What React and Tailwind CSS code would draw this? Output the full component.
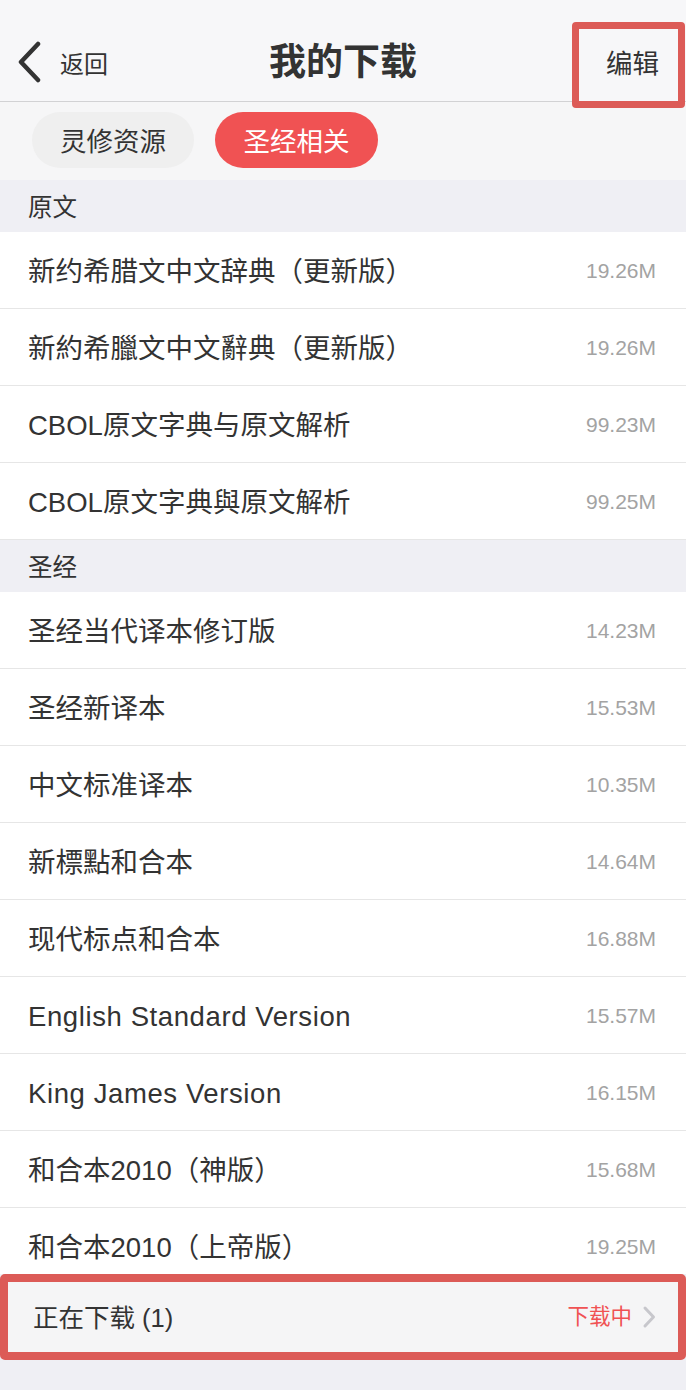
import React from 'react';

const FONT = { fontFamily: '"Liberation Sans", "Noto Sans CJK SC", sans-serif' };

const sections = [
  {
    title: '原文',
    items: [
      ['新约希腊文中文辞典（更新版）', '19.26M'],
      ['新約希臘文中文辭典（更新版）', '19.26M'],
      ['CBOL原文字典与原文解析', '99.23M'],
      ['CBOL原文字典與原文解析', '99.25M'],
    ],
  },
  {
    title: '圣经',
    items: [
      ['圣经当代译本修订版', '14.23M'],
      ['圣经新译本', '15.53M'],
      ['中文标准译本', '10.35M'],
      ['新標點和合本', '14.64M'],
      ['现代标点和合本', '16.88M'],
      ['English Standard Version', '15.57M', true],
      ['King James Version', '16.15M', true],
      ['和合本2010（神版）', '15.68M'],
      ['和合本2010（上帝版）', '19.25M'],
    ],
  },
];

function Row({ name, size, latin }) {
  return (
    <div className="flex items-center justify-between h-[77px] border-b border-[#e6e6e6] bg-white pl-[28px] pr-[30px]">
      <span className={`mt-[4px] text-[27.5px] text-[#333333] leading-none ${latin ? 'tracking-[0.6px]' : ''}`}>{name}</span>
      <span className="text-[21px] text-[#a3a3a3] leading-none">{size}</span>
    </div>
  );
}

export default function App() {
  return (
    <div className="w-[686px] h-[1390px] flex flex-col bg-[#efeff4] overflow-hidden" style={FONT}>
      {/* nav bar */}
      <div className="relative h-[102px] shrink-0 bg-[#f7f7f9] border-b border-[#d2d2d4] pt-[22px]">
        <div className="relative flex items-center h-[79px]">
          <div className="flex items-center pl-[16px] gap-[18px]">
            <svg width="26" height="42" viewBox="0 0 26 42" fill="none">
              <path d="M22 3 L5 21 L22 39" stroke="#333" strokeWidth="4.5" strokeLinecap="round" strokeLinejoin="round" />
            </svg>
            <span className="text-[24px] text-[#333] leading-none mt-[6px]">返回</span>
          </div>
          <div className="absolute inset-x-0 flex justify-center pointer-events-none">
            <span className="text-[37px] font-bold text-[#333] leading-none mt-[2px]">我的下载</span>
          </div>
          <span className="ml-auto mr-[27px] text-[26.5px] text-[#333] leading-none mt-[6px]">编辑</span>
        </div>
        <div className="absolute left-[572px] top-[22px] w-[113px] h-[86px] border-[7px] border-[#dc5b57] rounded-[4px]" />
      </div>

      {/* tabs */}
      <div className="h-[78px] shrink-0 bg-[#f6f6f7] flex items-start gap-[21px] pl-[32px] pt-[10px]">
        <div className="w-[162px] h-[56px] rounded-full bg-[#efefef] flex items-center justify-center pt-[5px] text-[26.5px] leading-none text-[#333]">灵修资源</div>
        <div className="w-[163px] h-[56px] rounded-full bg-[#f05253] flex items-center justify-center pt-[5px] text-[26.5px] leading-none text-white">圣经相关</div>
      </div>

      {/* list */}
      <div className="h-[1094px] shrink-0 overflow-hidden bg-white">
        {sections.map((s) => (
          <div key={s.title}>
            <div className="h-[52px] bg-[#efeff4] flex items-center pl-[28px] pt-[4px] text-[24.5px] leading-none text-[#333]">{s.title}</div>
            {s.items.map(([name, size, latin]) => (
              <Row key={name} name={name} size={size} latin={latin} />
            ))}
          </div>
        ))}
      </div>

      {/* downloading bar */}
      <div className="h-[86px] shrink-0 bg-[#f5f5f6] border-[8px] border-[#dc5b57] rounded-[5px] flex items-center pl-[25px] pr-[21px]">
        <span className="text-[25.5px] text-[#333] leading-none mt-[4px]">正在下载 (1)</span>
        <span className="ml-auto text-[21.5px] text-[#f05253] leading-none mt-[2px]">下载中</span>
        <svg className="ml-[9px]" width="16" height="24" viewBox="0 0 16 24" fill="none">
          <path d="M4 3 L12.5 12 L4 21" stroke="#c7c7cc" strokeWidth="3" strokeLinecap="round" strokeLinejoin="round" />
        </svg>
      </div>

      <div className="flex-1 bg-[#efeff4]" />
    </div>
  );
}
